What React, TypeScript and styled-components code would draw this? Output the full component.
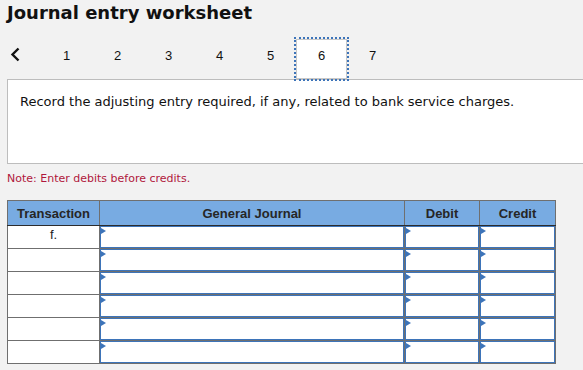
import React from 'react'
import styled, { createGlobalStyle } from 'styled-components'

const GlobalStyle = createGlobalStyle`
  html, body {
    margin: 0;
    padding: 0;
    overflow: hidden;
    background: #f2f2f2;
  }
`

const Page = styled.div`
  padding: 0 0 0 7px;
  width: 600px;
`

const Title = styled.h1`
  margin: 0;
  padding-top: 2px;
  height: 37px;
  font-family: 'DejaVu Sans', Verdana, sans-serif;
  font-size: 18px;
  line-height: 22px;
  font-weight: bold;
  color: #111;
`

const Nav = styled.div`
  display: flex;
  align-items: stretch;
  height: 40px;
`

const Back = styled.div`
  width: 34px;
  padding: 8px 0 0 3px;
  box-sizing: border-box;
`

interface Tab {
  active?: boolean
}
const Tab = styled.div<Tab>`
  width: 51px;
  padding-top: 9px;
  text-align: center;
  font-family: 'Liberation Sans', Arial, sans-serif;
  font-size: 13px;
  line-height: 15px;
  color: #111;
  box-sizing: border-box;
  position: relative;
  z-index: 1;
  ${({ active }) =>
    active &&
    `
    background: #fff;
    border: 1px solid #c8c8c8;
    padding-top: 8px;
    outline: 2px dotted #3d74b9;
    outline-offset: 0;
  `}
`

const Question = styled.div`
  background: #fff;
  border: 1px solid #bdbdbd;
  height: 85px;
  box-sizing: border-box;
  padding: 14px 0 0 12px;
  font-family: 'DejaVu Sans', Verdana, sans-serif;
  font-size: 13px;
  color: #111;
`

const Note = styled.div`
  font-family: 'DejaVu Sans', Verdana, sans-serif;
  font-size: 11px;
  color: #b0173c;
  height: 36px;
  line-height: 30px;
`

const Table = styled.table`
  border-collapse: collapse;
  table-layout: fixed;
  background: #fff;
  border: 1px solid #6f6f6f;
`

interface HeadCell {
  width: number
}
const HeadCell = styled.th<HeadCell>`
  width: ${({ width }) => width}px;
  height: 24px;
  padding: 0;
  background: #78abe2;
  border: 1px solid #6f6f6f;
  border-left: 1px solid #2c2c2c;
  border-bottom: 1px solid #2c2c2c;
  font-family: 'Liberation Sans', Arial, sans-serif;
  font-size: 13px;
  font-weight: bold;
  color: #262626;
  &:first-child {
    border-left: 1px solid #6f6f6f;
  }
`

const Cell = styled.td`
  height: 22px;
  padding: 0;
  border: 1px solid #6f6f6f;
  font-family: 'Liberation Sans', Arial, sans-serif;
  font-size: 13px;
  color: #222;
  text-align: center;
  vertical-align: top;
  line-height: 18px;
`

const InputBox = styled.div`
  height: 22px;
  box-sizing: border-box;
  border: 1px solid #3d74b9;
  position: relative;
  background: #fff;
`

const Marker = styled.span`
  position: absolute;
  left: 0;
  top: 1px;
  width: 0;
  height: 0;
  border-left: 5px solid #3d74b9;
  border-top: 3px solid transparent;
  border-bottom: 3px solid transparent;
`

const columns = [
  { key: 'transaction', headerText: 'Transaction', width: 91 },
  { key: 'journal', headerText: 'General Journal', width: 304 },
  { key: 'debit', headerText: 'Debit', width: 74 },
  { key: 'credit', headerText: 'Credit', width: 75 },
]

const rows = ['f.', '', '', '', '', '']

const Input = () => (
  <Cell>
    <InputBox>
      <Marker />
    </InputBox>
  </Cell>
)

export default function App() {
  return (
    <>
      <GlobalStyle />
      <Page>
        <Title>Journal entry worksheet</Title>
        <Nav>
          <Back>
            <svg width="10" height="15" viewBox="0 0 10 15">
              <polyline
                points="8.5,1.5 2.5,7.5 8.5,13.5"
                fill="none"
                stroke="#111"
                strokeWidth="2.4"
              />
            </svg>
          </Back>
          {[1, 2, 3, 4, 5, 6, 7].map(n => (
            <Tab key={n} active={n === 6}>
              {n}
            </Tab>
          ))}
        </Nav>
        <Question>
          Record the adjusting entry required, if any, related to bank service charges.
        </Question>
        <Note>Note: Enter debits before credits.</Note>
        <Table>
          <thead>
            <tr>
              {columns.map(column => (
                <HeadCell key={column.key} width={column.width}>
                  {column.headerText}
                </HeadCell>
              ))}
            </tr>
          </thead>
          <tbody>
            {rows.map((transaction, i) => (
              <tr key={i}>
                <Cell>{transaction}</Cell>
                <Input />
                <Input />
                <Input />
              </tr>
            ))}
          </tbody>
        </Table>
      </Page>
    </>
  )
}
